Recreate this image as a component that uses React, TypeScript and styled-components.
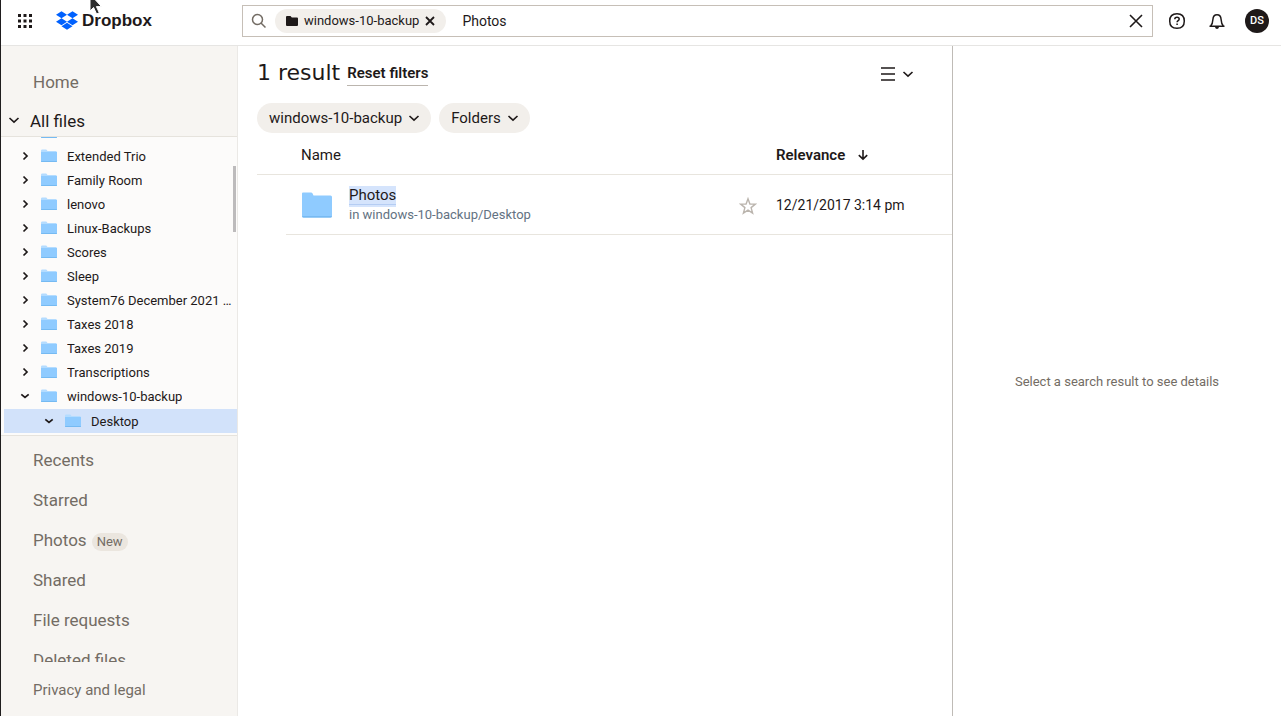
import React from "react";
import styled, { createGlobalStyle } from "styled-components";

const ink = "#1e1919";
const muted = "#736c64";
const sand = "#f7f5f2";
const pill = "#f2efeb";

const GlobalStyle = createGlobalStyle`
  *, *::before, *::after { box-sizing: border-box; }
  body {
    margin: 0;
    background: #fff;
    color: ${ink};
    font: 15px/20px Roboto, "Liberation Sans", sans-serif;
  }
  button, input { font: inherit; color: inherit; }
  svg { display: block; flex: none; }
`;

const Page = styled.div`
  position: relative;
  display: flex;
  flex-direction: column;
  height: 100vh;
  overflow: hidden;
  border-left: 1px solid #1f1d1e;
`;

const Header = styled.header`
  display: flex;
  align-items: center;
  flex: none;
  height: 46px;
  padding: 0 12px 4px 17px;
  border-bottom: 1px solid #e6e5e3;
`;

const IconButton = styled.button`
  display: inline-flex;
  align-items: center;
  gap: 6px;
  padding: 0;
  border: 0;
  background: none;
  vertical-align: middle;
  cursor: pointer;
`;

const Brand = styled.a`
  display: flex;
  align-items: center;
  flex: none;
  gap: 4px;
  width: 203px;
  padding-left: 24px;
  color: ${ink};
  font: bold 17px/20px "Liberation Sans", Arial, sans-serif;
  text-decoration: none;
`;

const Search = styled.form`
  display: flex;
  align-items: center;
  flex: 1;
  min-width: 0;
  height: 32px;
  margin-left: 7px;
  padding: 0 9px 0 8px;
  border: 1px solid #c6bfb7;
`;

const ScopePill = styled.span`
  display: flex;
  align-items: center;
  height: 24px;
  margin-left: 8px;
  padding: 0 11px;
  gap: 6px;
  border-radius: 12px;
  background: ${pill};
  font-size: 13px;
  white-space: nowrap;
`;

const SearchInput = styled.input`
  flex: 1;
  min-width: 0;
  margin-left: 16px;
  padding: 0;
  border: 0;
  outline: 0;
  background: none;
  font-size: 14px;
`;

const HeaderActions = styled.div`
  display: flex;
  align-items: center;
  gap: 20px;
  margin-left: 14px;
`;

const Avatar = styled.button`
  width: 24px;
  height: 24px;
  margin-left: -2px;
  padding: 0;
  border: 0;
  border-radius: 50%;
  background: ${ink};
  color: #fff;
  font-size: 11px;
  font-weight: 500;
  line-height: 24px;
`;

const Body = styled.div`
  display: grid;
  grid-template-columns: 237px minmax(0, 1fr) 329px;
  flex: 1;
  min-height: 0;
`;

const Sidebar = styled.nav`
  display: flex;
  flex-direction: column;
  min-height: 0;
  padding-top: 16px;
  border-right: 1px solid #ebe9e6;
  background: ${sand};
`;

const NavLink = styled.a`
  display: flex;
  align-items: center;
  flex: none;
  gap: 5px;
  height: 40px;
  padding-left: 32px;
  color: ${muted};
  font-size: 17px;
  text-decoration: none;
`;

const AllFiles = styled.div`
  display: flex;
  align-items: center;
  flex: none;
  gap: 10px;
  height: 34px;
  padding: 2px 0 0 7px;
  a { padding-top: 1px; color: ${ink}; font-size: 17px; text-decoration: none; }
`;

const Tree = styled.div`
  position: relative;
  display: flex;
  flex: none;
  flex-direction: column;
  justify-content: flex-end;
  height: 300px;
  padding-bottom: 2px;
  overflow: hidden;
  border: solid #e6e3dd;
  border-width: 1px 0;
  background: #fcfbfa;
`;

const TreeRow = styled.div<{ $selected?: boolean }>`
  display: flex;
  align-items: center;
  flex: none;
  height: 24px;
  margin: ${(p) => (p.$selected ? "1px 0 0 3px" : "0")};
  padding: 0 4px 0 ${(p) => (p.$selected ? "37px" : "16px")};
  background: ${(p) => (p.$selected ? "#d2e2fa" : "none")};
  a {
    display: flex;
    align-items: center;
    gap: 10px;
    margin-left: 8px;
    min-width: 0;
    color: ${ink};
    font-size: 13px;
    text-decoration: none;
  }
  span { padding-top: 2px; overflow: hidden; text-overflow: ellipsis; white-space: nowrap; }
`;

const ScrollThumb = styled.div`
  position: absolute;
  top: 29px;
  right: 1px;
  width: 3px;
  height: 66px;
  background: #bdbbbc;
`;

const NavList = styled.div`
  display: flex;
  flex: 1;
  flex-direction: column;
  min-height: 0;
  padding-top: 4px;
  overflow: hidden;
`;

const NewBadge = styled.span`
  margin-top: 3px;
  padding: 0 5px;
  border-radius: 9px;
  background: #ebe6df;
  font-size: 13px;
  line-height: 18px;
`;

const SidebarFooter = styled.footer`
  flex: none;
  height: 54px;
  padding: 18px 0 0 32px;
  a { color: ${muted}; text-decoration: none; }
`;

const Main = styled.main`
  min-width: 0;
  padding: 14px 0 0 19px;
`;

const TitleBar = styled.div`
  display: flex;
  align-items: center;
  gap: 7px;
  height: 28px;
  padding-right: 38px;
`;

const Title = styled.h1`
  margin: 0;
  padding-bottom: 2px;
  font: 22px/26px "DejaVu Sans", sans-serif;
`;

const ResetButton = styled.button`
  margin: 0 auto 0 0;
  padding: 0;
  border: 0;
  border-bottom: 1px solid #bbb5ae;
  background: none;
  font-weight: 600;
  line-height: 23px;
`;

const Filters = styled.div`
  display: flex;
  gap: 8px;
  margin-top: 15px;
`;

const FilterButton = styled.button`
  display: flex;
  align-items: center;
  gap: 6px;
  height: 30px;
  padding: 0 11px 0 12px;
  border: 0;
  border-radius: 15px;
  background: ${pill};
`;

const Results = styled.table`
  width: 100%;
  margin-top: 2px;
  table-layout: fixed;
  border-collapse: separate;
  border-spacing: 0;
`;

const Col = styled.col<{ $width?: string }>`
  width: ${(p) => p.$width ?? "auto"};
`;

const Heading = styled.th<{ $indent?: boolean; $strong?: boolean }>`
  height: 40px;
  padding: 0 0 0 ${(p) => (p.$indent ? "15px" : "0")};
  border-bottom: 1px solid #e8e5de;
  font-weight: ${(p) => (p.$strong ? 600 : 400)};
  text-align: left;
  button { gap: 12px; font-weight: inherit; }
`;

const Cell = styled.td<{ $indent?: boolean; $bare?: boolean; $small?: boolean }>`
  height: 60px;
  padding: 0 0 0 ${(p) => (p.$indent ? "15px" : "0")};
  border-bottom: ${(p) => (p.$bare ? "0" : "1px solid #e8e5de")};
  font-size: ${(p) => (p.$small ? "14px" : "15px")};
`;

const Item = styled.div`
  display: flex;
  align-items: center;
  gap: 16px;
`;

const ItemText = styled.div`
  display: flex;
  flex-direction: column;
  align-items: flex-start;
  padding-top: 1px;
`;

const ItemName = styled.a`
  border-bottom: 1px solid #b5cdf3;
  box-shadow: 0 2px 0 #d5e4fc;
  background: #d5e4fc;
  color: ${ink};
  line-height: 18px;
  text-decoration: none;
`;

const ItemPath = styled.span`
  color: #637282;
  font-size: 13px;
  line-height: 20px;
`;

const Details = styled.aside`
  display: flex;
  align-items: center;
  justify-content: center;
  padding-top: 2px;
  border-left: 1px solid #bfbbb6;
  color: ${muted};
  font-size: 13px;
`;

const Pointer = styled.svg`
  position: absolute;
  top: -7px;
  left: 88px;
`;

const Chevron = () => (
  <svg width="12" height="12" viewBox="0 0 12 12" fill="none" stroke={ink} strokeWidth="1.6">
    <path d="M1.500 4L6 8.200 10.500 4" />
  </svg>
);

const Cross = ({ size, weight }: { size: number; weight: number }) => (
  <svg width={size} height={size} viewBox={`0 0 ${size} ${size}`} stroke={ink} strokeWidth={weight}>
    <path d={`M1 1L${size - 1} ${size - 1}M${size - 1} 1L1 ${size - 1}`} />
  </svg>
);

const SmallFolder = () => (
  <svg width="16" height="14" viewBox="0 0 16 14">
    <path d="M0 2C0 1 .4.5 1.4.5h3.4c.8 0 1 .5 1.6 1.5H14c1.500 0 2 .5 2 2v3H0z" fill="#b4dcff" />
    <path d="M0 3h16v9c0 .7-.4 1-1 1H1c-.6 0-1-.3-1-1z" fill="#8fcbff" />
    <path d="M0 12h16c0 .7-.4 1-1 1H1c-.6 0-1-.3-1-1z" fill="#75baf2" />
  </svg>
);

const LargeFolder = () => (
  <svg width="32" height="26" viewBox="0 0 32 26">
    <path d="M1 1.500Q1 .5 2 .5h8q1 0 1.600 1L12.500 3.500H29.500q1.500 0 1.500 1.500v19q0 1.500-1.500 1.500h-27Q1 25.500 1 24z" fill="#8fcbff" />
    <path d="M1 24.200h30q-.2 1.300-1.500 1.300h-27Q1.200 25.500 1 24.200z" fill="#6fb4ee" />
  </svg>
);

const folders = [
  "Documents", "Extended Trio", "Family Room", "lenovo", "Linux-Backups", "Scores", "Sleep",
  "System76 December 2021 Backup", "Taxes 2018", "Taxes 2019", "Transcriptions", "windows-10-backup",
];

const Branch = ({ name, open, selected }: { name: string; open?: boolean; selected?: boolean }) => (
  <TreeRow $selected={selected}>
    <IconButton aria-label={`Toggle ${name}`}>
      <svg width="16" height="16" viewBox="0 0 16 16" fill="none" stroke={ink} strokeWidth="1.700">
        <path d={open ? "M4.300 6.300L8 9.500l3.700-3.200" : "M6.500 4.500L10 8l-3.500 3.500"} />
      </svg>
    </IconButton>
    <a href="#folder"><SmallFolder /><span>{name}</span></a>
  </TreeRow>
);

export default function App() {
  return (
    <Page>
      <GlobalStyle />
      <Header>
        <IconButton aria-label="Apps">
          <svg width="14" height="14" viewBox="0 0 14 14" fill={ink}>
            {[0, 5.5, 11].map((y) => [0, 5.5, 11].map((x) => <rect key={`${x}-${y}`} x={x} y={y} width="3" height="3" />))}
          </svg>
        </IconButton>
        <Brand href="#home">
          <svg width="22" height="19" viewBox="0 1.800 24 20.400" fill="#0061fe">
            <path d="M6 1.807L0 5.629l6 3.822 6-3.822zM18 1.807l-6 3.822 6 3.822 6-3.822zM0 13.274l6 3.822 6-3.822-6-3.822zM18 9.452l-6 3.822 6 3.822 6-3.822zM6 18.371l6 3.822 6-3.822-6-3.822z" />
          </svg>
          Dropbox
        </Brand>
        <Search role="search" onSubmit={(e) => e.preventDefault()}>
          <svg width="16" height="16" viewBox="0 0 16 16" fill="none" stroke="#736c64" strokeWidth="1.500">
            <circle cx="6.500" cy="6.500" r="5" />
            <path d="M10 10l4.500 4.500" />
          </svg>
          <ScopePill>
            <svg width="12" height="10" viewBox="0 0 12 10" fill={ink}>
              <path d="M0 1Q0 0 1 0h3.500l1.300 1.500H11q1 0 1 1V9q0 1-1 1H1Q0 10 0 9z" />
            </svg>
            windows-10-backup
            <IconButton type="button" aria-label="Remove folder scope"><Cross size={10} weight={1.8} /></IconButton>
          </ScopePill>
          <SearchInput aria-label="Search" defaultValue="Photos" />
          <IconButton type="button" aria-label="Clear search"><Cross size={14} weight={1.6} /></IconButton>
        </Search>
        <HeaderActions>
          <IconButton aria-label="Help">
            <svg width="20" height="20" viewBox="0 0 20 20" fill="none" stroke={ink} strokeWidth="1.500">
              <path d="M10 2.700c5.200 0 7.300 2.100 7.300 7.300s-2.100 7.300-7.300 7.300S2.700 15.200 2.700 10 4.800 2.700 10 2.700z" />
              <path d="M7.800 8.200c0-1.300.9-2 2.200-2s2.200.7 2.200 1.800c0 1.700-2.100 1.500-2.100 3.300M10.100 12.400v1.600" />
            </svg>
          </IconButton>
          <IconButton aria-label="Notifications">
            <svg width="20" height="20" viewBox="0 0 20 20" fill="none" stroke={ink} strokeWidth="1.500">
              <path d="M2.500 15.200h15M3.700 15c1.500-1.600 2-3.300 2.200-6.500.2-3 1.500-4.700 4.100-4.700s3.900 1.700 4.100 4.700c.2 3.200.7 4.900 2.200 6.500" />
              <path d="M8 16h4q-.4 2-2 2t-2-2z" fill={ink} stroke="none" />
            </svg>
          </IconButton>
          <Avatar aria-label="Account">DS</Avatar>
        </HeaderActions>
      </Header>

      <Body>
        <Sidebar aria-label="Files">
          <NavLink href="#home">Home</NavLink>
          <AllFiles>
            <IconButton aria-label="Collapse all files"><Chevron /></IconButton>
            <a href="#files">All files</a>
          </AllFiles>
          <Tree>
            {folders.map((name) => <Branch key={name} name={name} open={name === "windows-10-backup"} />)}
            <Branch name="Desktop" open selected />
            <ScrollThumb />
          </Tree>
          <NavList>
            <NavLink href="#recents">Recents</NavLink>
            <NavLink href="#starred">Starred</NavLink>
            <NavLink href="#photos">Photos <NewBadge>New</NewBadge></NavLink>
            <NavLink href="#shared">Shared</NavLink>
            <NavLink href="#requests">File requests</NavLink>
            <NavLink href="#deleted">Deleted files</NavLink>
          </NavList>
          <SidebarFooter><a href="#privacy">Privacy and legal</a></SidebarFooter>
        </Sidebar>

        <Main>
          <TitleBar>
            <Title>1 result</Title>
            <ResetButton>Reset filters</ResetButton>
            <IconButton aria-label="View options">
              <svg width="16" height="16" viewBox="0 0 16 16" stroke={ink} strokeWidth="1.500">
                <path d="M1 2h14M1 8h14M1 14h14" />
              </svg>
              <Chevron />
            </IconButton>
          </TitleBar>
          <Filters>
            <FilterButton>windows-10-backup <Chevron /></FilterButton>
            <FilterButton>Folders <Chevron /></FilterButton>
          </Filters>
          <Results>
            <colgroup>
              <Col $width="29px" /><Col /><Col $width="37px" /><Col $width="176px" />
            </colgroup>
            <thead>
              <tr>
                <Heading />
                <Heading $indent scope="col">Name</Heading>
                <Heading />
                <Heading $strong scope="col">
                  <IconButton>
                    Relevance
                    <svg width="12" height="12" viewBox="0 0 12 12" fill="none" stroke={ink} strokeWidth="1.600">
                      <path d="M6 1v9M1.800 6.200L6 10.200l4.200-4" />
                    </svg>
                  </IconButton>
                </Heading>
              </tr>
            </thead>
            <tbody>
              <tr>
                <Cell $bare />
                <Cell $indent>
                  <Item>
                    <LargeFolder />
                    <ItemText>
                      <ItemName href="#photos-folder">Photos</ItemName>
                      <ItemPath>in windows-10-backup/Desktop</ItemPath>
                    </ItemText>
                  </Item>
                </Cell>
                <Cell>
                  <IconButton aria-label="Star Photos">
                    <svg width="18" height="18" viewBox="0 0 18 18" fill="none" stroke="#bbb5ae" strokeWidth="1.400">
                      <path d="M9 1.800l1.900 5.300h5.500l-4.300 3.500 1.500 5.600L9 13.100l-4.600 3.100 1.500-5.600L1.600 7.100h5.500z" />
                    </svg>
                  </IconButton>
                </Cell>
                <Cell $small>12/21/2017 3:14 pm</Cell>
              </tr>
            </tbody>
          </Results>
        </Main>

        <Details>Select a search result to see details</Details>
      </Body>
      <Pointer width="14" height="22" viewBox="0 0 14 22" aria-hidden="true">
        <path d="M1 1v17l3.600-3.500 3 6.500 2.700-1.200-2.900-6.200h5.100z" fill="#2b2b2b" stroke="#fff" strokeWidth="1" />
      </Pointer>
    </Page>
  );
}
